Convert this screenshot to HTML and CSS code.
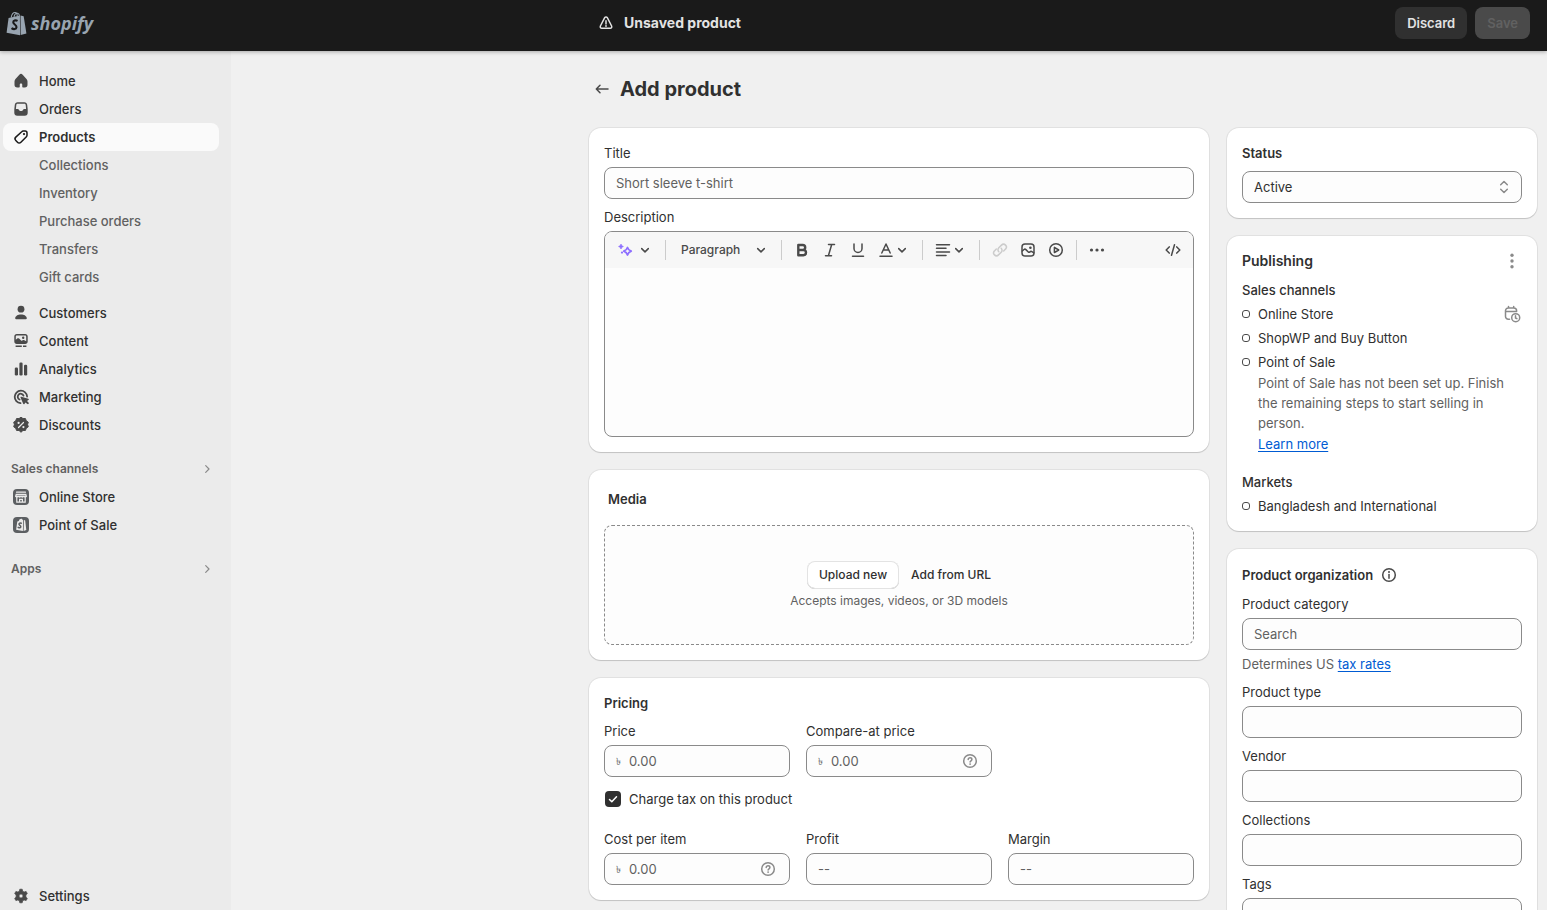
FILE: index.html
```html
<!DOCTYPE html>
<html lang="en">
<head>
<meta charset="utf-8">
<meta name="viewport" content="width=device-width, initial-scale=1">
<title>Add product</title>
<link rel="stylesheet" href="styles.css">
</head>
<body>
<svg class="sprite" aria-hidden="true">
  <symbol id="chevron-down" viewBox="0 0 20 20"><path class="line" d="m6.700 8.600 3.300 3.300 3.300-3.300"/></symbol>
  <symbol id="chevron-right" viewBox="0 0 20 20"><path class="line thin" d="m8.700 6.700 3.300 3.300-3.300 3.300"/></symbol>
  <symbol id="question" viewBox="0 0 20 20"><circle class="line" cx="10" cy="10" r="6.300"/><path class="line" d="M8.200 8.600c0-1.100.8-1.800 1.900-1.800s1.800.7 1.800 1.700c0 1.300-1.800 1.300-1.800 2.600"/><circle cx="10.100" cy="13.100" r=".9"/></symbol>
</svg>
<div class="app">
  <header class="topbar">
    <a class="brand" href="#" aria-label="shopify">
      <svg class="brand-bag" viewBox="0 0 22 26" aria-hidden="true">
        <path d="M2.700 7.200 14.600 4.500l.1 20.700L.6 22.600Z"/><path d="m15.200 4.500 3.300.9 2.900 18-6.100 1.700Z"/>
        <path class="handle" d="M5.400 6.800C6 3.700 7.700 1.400 9.600 1.500c1.600.1 2.200 1.700 2.200 4M8.400 6C8.900 3.500 10.600 2 12.200 2.200c1.300.2 1.800 1.300 1.900 2.800"/>
        <path class="cut" d="M12.100 10.300c-2.300-1.200-4.500-.4-4.500 1.500 0 2.300 3.600 2.300 3.400 5-.2 2.400-3 2.700-5.200 1"/>
      </svg>
      <span class="brand-name">shopify</span>
    </a>
    <div class="savebar">
      <svg class="icon" viewBox="0 0 20 20" aria-hidden="true"><path class="line" d="M8.700 4.700c.6-1 2-1 2.600 0l4.300 8.300c.5 1.100-.2 2.300-1.400 2.300H5.800c-1.200 0-1.900-1.200-1.400-2.300ZM10 7.700v3.300"/><circle cx="10" cy="13" r=".9"/></svg>
      <strong class="savebar-title">Unsaved product</strong>
      <button class="bar-button" type="button">Discard</button>
      <button class="bar-button is-disabled" type="button" disabled>Save</button>
    </div>
  </header>

  <nav class="sidebar" aria-label="Main">
    <ul class="nav">
      <li><a href="#"><svg class="icon" viewBox="0 0 20 20"><path d="M8.344 3.692a2.250 2.250 0 0 1 3.312 0l3.854 4.190a3.750 3.750 0 0 1 .99 2.538v3.330a2.750 2.750 0 0 1-2.750 2.750h-1.750a.75.75 0 0 1-.75-.75v-2c0-.69-.56-1.250-1.250-1.250s-1.250.56-1.250 1.250v2a.75.75 0 0 1-.75.75h-1.750a2.750 2.750 0 0 1-2.750-2.750v-3.330c0-.94.353-1.846.99-2.539l3.854-4.189Z"/></svg>Home</a></li>
      <li><a href="#"><svg class="icon" viewBox="0 0 20 20"><path fill-rule="evenodd" d="M6.600 3.300h6.800c1.500 0 2.600 1 2.800 2.400l.5 4.600v3.400a3 3 0 0 1-3 3H6.300a3 3 0 0 1-3-3v-3.400l.5-4.600c.2-1.400 1.300-2.400 2.800-2.400Zm.1 1.500c-.8 0-1.300.5-1.400 1.200L4.900 10h1.800c.7 0 1 .4 1.300 1 .4.700 1 1.100 2 1.100s1.600-.4 2-1.100c.3-.6.600-1 1.300-1h1.800l-.4-4c-.1-.7-.6-1.200-1.400-1.200Z"/></svg>Orders</a></li>
      <li><a class="is-active" href="#" aria-current="page"><svg class="icon" viewBox="0 0 20 20"><path class="line" d="M10.700 4.700c.4-.4.800-.6 1.400-.6h2c1.100 0 1.900.8 1.900 1.900v2.300c0 .5-.2 1-.6 1.400l-5.500 5.500c-1 1-2.500 1-3.400 0l-1.700-1.700c-1-1-1-2.400 0-3.400Z"/><circle cx="13" cy="7.100" r="1.100"/></svg>Products</a>
        <ul class="subnav">
          <li><a href="#">Collections</a></li>
          <li><a href="#">Inventory</a></li>
          <li><a href="#">Purchase orders</a></li>
          <li><a href="#">Transfers</a></li>
          <li><a href="#">Gift cards</a></li>
        </ul>
      </li>
      <li><a href="#"><svg class="icon" viewBox="0 0 20 20"><circle cx="10" cy="6.200" r="3.400"/><path d="M4.200 15.200c0-2.200 2.700-3.800 5.800-3.800s5.800 1.600 5.800 3.800c0 .7-.6 1.100-1.300 1.100h-9c-.7 0-1.300-.4-1.300-1.100Z"/></svg>Customers</a></li>
      <li><a href="#"><svg class="icon" viewBox="0 0 20 20"><path fill-rule="evenodd" d="M5.800 3h8.400c1.500 0 2.500 1 2.500 2.500v5c0 1.500-1 2.500-2.500 2.500H5.800c-1.500 0-2.500-1-2.500-2.500v-5C3.300 4 4.300 3 5.800 3Zm-1 5.700 1.400-1.200c.6-.5 1.300-.5 1.900.1l2 2c.3.300.7.200 1 0 .8-.7 1.500-.8 2.300-.3l1.800.9V5.700c0-.8-.4-1.200-1.200-1.200H6c-.8 0-1.200.4-1.200 1.200Zm7.400-3.100a1.200 1.200 0 1 1 0 2.400 1.200 1.200 0 0 1 0-2.400Z"/><path d="M4.600 14.400h6.200v1.500H4.600ZM12 14.400h3.400v1.500H12Z"/></svg>Content</a></li>
      <li><a href="#"><svg class="icon" viewBox="0 0 20 20"><rect x="3.800" y="8.500" width="3.200" height="8" rx="1.200"/><rect x="8.400" y="3.500" width="3.200" height="13" rx="1.200"/><rect x="13" y="5.800" width="3.200" height="10.700" rx="1.200"/></svg>Analytics</a></li>
      <li><a href="#"><svg class="icon" viewBox="0 0 20 20"><path class="line bold" d="M9.500 16.100A6.200 6.200 0 1 1 16.100 9.500"/><path class="line bold" d="M8.600 12.500a3 3 0 1 1 3.900-3.900"/><path d="M10.300 9.700 17.300 11.800c.7.200.7 1 .1 1.300l-1.400.8 1.700 1.900c.5.600-.6 1.800-1.300 1.300l-2-1.700-.9 1.500c-.4.600-1.100.5-1.300-.1L9.500 10.500c-.2-.5.300-1 .8-.8Z"/></svg>Marketing</a></li>
      <li><a href="#"><svg class="icon" viewBox="0 0 20 20"><path d="m10 2.200 2 1.400 2.400-.1.900 2.300 2 1.400-.7 2.300.7 2.300-2 1.400-.9 2.300-2.400-.1-2 1.900-2-1.900-2.400.1-.9-2.300-2-1.400.7-2.300-.7-2.300 2-1.400.9-2.300 2.400.1Z" stroke="currentColor" stroke-linejoin="round"/><path class="knock" d="m7.500 12.500 5-5"/><circle class="knock-fill" cx="7.600" cy="7.900" r="1.100"/><circle class="knock-fill" cx="12.400" cy="12.100" r="1.100"/></svg>Discounts</a></li>
    </ul>
    <a class="nav-heading" href="#">Sales channels<svg class="icon muted" viewBox="0 0 20 20"><use href="#chevron-right"/></svg></a>
    <ul class="nav">
      <li><a href="#"><svg class="icon channel" viewBox="0 0 20 20"><rect x="2" y="2" width="16" height="16" rx="4"/><path class="knock" d="M5.500 5.200h9M5.200 7.300 4.700 9.200h10.600l-.5-1.900Z"/><path class="knock-fill" d="M4.300 9h11.400c0 1-.6 1.700-1.400 1.700s-1.200-.3-1.500-.8c-.6 1-2.200 1-2.800 0-.6 1-2.200 1-2.800 0-.3.500-.8.800-1.500.8S4.300 10 4.300 9Z"/><path class="knock" d="M5.800 10.500v4.700h8.400v-4.700M8.600 15v-2.600h2.800V15"/></svg>Online Store</a></li>
      <li><a href="#"><svg class="icon channel" viewBox="0 0 20 20"><rect x="2" y="2" width="16" height="16" rx="4"/><path class="knock-fill" d="m6.300 6.500 1.500-.5c.4-1.500 1.300-2.300 2.300-2.300.8 0 1.300.5 1.600 1.300l.5-.1-.3 11-6.800-1.200ZM13 5l1.200.5 1.100 9.500-2.700.9Z"/><path class="line" d="M10.300 8.300c-1.300-.6-2.300-.2-2.300.8 0 1.200 1.900 1.200 1.800 2.600-.1 1.200-1.400 1.400-2.600.6"/></svg>Point of Sale</a></li>
    </ul>
    <a class="nav-heading" href="#">Apps<svg class="icon muted" viewBox="0 0 20 20"><use href="#chevron-right"/></svg></a>
    <ul class="nav nav-bottom">
      <li><a href="#"><svg class="icon" viewBox="0 0 20 20"><path fill-rule="evenodd" d="M8.800 3.200h2.400l.5 2 1.400.8 2-.6 1.200 2.100L14.900 9v2l1.400 1.500-1.200 2.100-2-.6-1.400.8-.5 2H8.800l-.5-2-1.400-.8-2 .6-1.200-2.100L5.100 11V9L3.700 7.500l1.200-2.100 2 .6 1.400-.8ZM10 8a2 2 0 1 0 0 4 2 2 0 0 0 0-4Z" stroke="currentColor" stroke-width=".7" stroke-linejoin="round"/></svg>Settings</a></li>
    </ul>
  </nav>

  <main class="main">
    <div class="page">
      <div class="page-title">
        <a href="#" aria-label="Back"><svg class="icon" viewBox="0 0 20 20"><path class="line" d="M16 10H4.500M8 6.300 4.300 10 8 13.700"/></svg></a>
        <h1>Add product</h1>
      </div>
      <form class="columns">
        <div class="column">
          <section class="card">
            <div class="field">
              <label for="title">Title</label>
              <input class="control" id="title" type="text" placeholder="Short sleeve t-shirt">
            </div>
            <div class="field">
              <label for="description">Description</label>
              <div class="editor">
                <div class="toolbar">
                  <button class="tool pair magic" type="button" aria-label="Generate text"><svg class="icon" viewBox="0 0 20 20"><path class="line bold" d="M12.500 7.500c.6 1.900 1.600 2.900 3.700 3.700-2.100.8-3.100 1.800-3.700 3.800-.6-2-1.600-3-3.700-3.800 2.100-.8 3.100-1.800 3.700-3.700Z"/><path d="M6 4.300c.4 1.200 1 1.800 2.300 2.200C7 6.900 6.400 7.500 6 8.800 5.600 7.500 5 6.900 3.700 6.500 5 6.100 5.600 5.500 6 4.300Z" stroke="currentColor"/><circle cx="7" cy="12.600" r="1.100"/></svg><svg class="icon dark" viewBox="0 0 20 20"><use href="#chevron-down"/></svg></button>
                  <span class="divider"></span>
                  <button class="tool paragraph" type="button">Paragraph<svg class="icon" viewBox="0 0 20 20"><use href="#chevron-down"/></svg></button>
                  <span class="divider"></span>
                  <div class="tool-group">
                    <button class="tool" type="button" aria-label="Bold"><svg class="icon" viewBox="0 0 20 20"><path class="line heavy" d="M6.300 5h4.400a2.500 2.500 0 0 1 0 5H6.300Zm0 5h5.100a2.600 2.600 0 0 1 0 5.200H6.300Z"/></svg></button>
                    <button class="tool" type="button" aria-label="Italic"><svg class="icon" viewBox="0 0 20 20"><path class="line" d="M8.500 4.500h6M5.500 15.700h6M11.700 4.500 8.400 15.700"/></svg></button>
                    <button class="tool" type="button" aria-label="Underline"><svg class="icon" viewBox="0 0 20 20"><path class="line" d="M6 4v4.500a4 4 0 0 0 8 0V4M4.500 16.200h11"/></svg></button>
                    <button class="tool pair" type="button" aria-label="Text color"><svg class="icon" viewBox="0 0 20 20"><path class="line" d="m5.800 13 4.200-9 4.200 9M7.200 10h5.600M4 16.200h12"/></svg><svg class="icon" viewBox="0 0 20 20"><use href="#chevron-down"/></svg></button>
                  </div>
                  <span class="divider"></span>
                  <button class="tool pair align" type="button" aria-label="Alignment"><svg class="icon" viewBox="0 0 20 20"><path class="line" d="M3.500 4.700h13M3.500 8.300h9.500M3.500 11.900h13M3.500 15.500h9.500"/></svg><svg class="icon" viewBox="0 0 20 20"><use href="#chevron-down"/></svg></button>
                  <span class="divider"></span>
                  <div class="tool-group">
                    <button class="tool is-faded" type="button" aria-label="Link" disabled><svg class="icon" viewBox="0 0 20 20"><path class="line" d="M8.800 11.800a2.800 2.800 0 0 1 0-4l2.700-2.700a2.800 2.800 0 0 1 4 4L13.700 11M11.200 8.200a2.800 2.800 0 0 1 0 4l-2.700 2.700a2.800 2.800 0 0 1-4-4L6.300 9"/></svg></button>
                    <button class="tool" type="button" aria-label="Image"><svg class="icon" viewBox="0 0 20 20"><rect class="line" x="4" y="4" width="12" height="12" rx="3"/><path class="line" d="m4.300 11 1.700-1.500c.6-.5 1.300-.5 1.900.1l2.400 2.400c.5.500 1 .4 1.600-.1.700-.6 1.400-.7 2.100-.2l1.800 1.200"/><circle cx="12.400" cy="7.700" r="1.300"/></svg></button>
                    <button class="tool" type="button" aria-label="Video"><svg class="icon" viewBox="0 0 20 20"><circle class="line" cx="10" cy="10" r="6.300"/><path class="line" d="M8.400 7.400v5.200l4.300-2.600Z"/></svg></button>
                  </div>
                  <span class="divider"></span>
                  <button class="tool more" type="button" aria-label="More"><svg class="icon" viewBox="0 0 20 20"><circle cx="4.500" cy="10" r="1.600"/><circle cx="10" cy="10" r="1.600"/><circle cx="15.500" cy="10" r="1.600"/></svg></button>
                  <button class="tool source" type="button" aria-label="Show HTML"><svg class="icon" viewBox="0 0 20 20"><path class="line" d="M6.200 6.900 3.200 10l3 3.100M13.800 6.900l3 3.100-3 3.100M11.500 4.800l-3 10.400"/></svg></button>
                </div>
                <textarea id="description"></textarea>
              </div>
            </div>
          </section>

          <section class="card media">
            <h2>Media</h2>
            <div class="dropzone">
              <div class="upload-row">
                <button class="upload" type="button">Upload new</button>
                <button class="plain" type="button">Add from URL</button>
              </div>
              <p>Accepts images, videos, or 3D models</p>
            </div>
          </section>

          <section class="card">
            <h2>Pricing</h2>
            <div class="price-grid">
              <div class="field">
                <label for="price">Price</label>
                <div class="control"><span class="currency">৳</span><input id="price" type="text" placeholder="0.00"></div>
              </div>
              <div class="field">
                <label for="compare">Compare-at price</label>
                <div class="control"><span class="currency">৳</span><input id="compare" type="text" placeholder="0.00"><svg class="icon muted" viewBox="0 0 20 20"><use href="#question"/></svg></div>
              </div>
            </div>
            <label class="check"><span class="check-box"><input type="checkbox" checked><svg viewBox="0 0 16 16"><path class="line" d="m4.500 8.500 2.300 2.300 4.700-5.100"/></svg></span>Charge tax on this product</label>
            <div class="price-grid">
              <div class="field">
                <label for="cost">Cost per item</label>
                <div class="control"><span class="currency">৳</span><input id="cost" type="text" placeholder="0.00"><svg class="icon muted" viewBox="0 0 20 20"><use href="#question"/></svg></div>
              </div>
              <div class="field">
                <label for="profit">Profit</label>
                <input class="control" id="profit" type="text" placeholder="--">
              </div>
              <div class="field">
                <label for="margin">Margin</label>
                <input class="control" id="margin" type="text" placeholder="--">
              </div>
            </div>
          </section>
        </div>

        <div class="column">
          <section class="card">
            <h2><label for="status">Status</label></h2>
            <div class="select">
              <select class="control" id="status"><option>Active</option><option>Draft</option></select>
              <svg class="icon muted" viewBox="0 0 20 20"><path class="line" d="M6.700 7.700 10 4.500l3.300 3.200M6.700 12.300l3.300 3.200 3.300-3.200"/></svg>
            </div>
          </section>

          <section class="card publishing">
            <div class="card-head">
              <h2>Publishing</h2>
              <button class="tool" type="button" aria-label="Publishing options"><svg class="icon muted" viewBox="0 0 20 20"><circle cx="10" cy="4.300" r="1.700"/><circle cx="10" cy="10" r="1.700"/><circle cx="10" cy="15.700" r="1.700"/></svg></button>
            </div>
            <h3>Sales channels</h3>
            <ul class="channels">
              <li>Online Store<button class="tool schedule" type="button" aria-label="Schedule"><svg class="icon muted" viewBox="0 0 20 20"><path class="line" d="M7.500 15.200H6.300A2.800 2.800 0 0 1 3.500 12.400V6.800A2.800 2.800 0 0 1 6.300 4h5.500a2.800 2.800 0 0 1 2.800 2.800v.7M3.500 7.500h11M6.500 2.500V4M11.700 2.500V4"/><circle class="line" cx="13.700" cy="13.700" r="4"/><path class="line" d="M13.500 11.700V14l1.400.7"/></svg></button></li>
              <li>ShopWP and Buy Button</li>
              <li>Point of Sale</li>
            </ul>
            <div class="channel-note">
              <p>Point of Sale has not been set up. Finish the remaining steps to start selling in person.</p>
              <a href="#">Learn more</a>
            </div>
            <h3>Markets</h3>
            <ul class="channels">
              <li>Bangladesh and International</li>
            </ul>
          </section>

          <section class="card organization">
            <h2>Product organization<svg class="icon" viewBox="0 0 20 20"><circle class="line" cx="10" cy="10" r="6.300"/><path class="line" d="M10 9.500v3.700"/><circle cx="10" cy="7" r="1"/></svg></h2>
            <div class="field">
              <label for="category">Product category</label>
              <input class="control" id="category" type="text" placeholder="Search">
              <p class="hint">Determines US <a href="#">tax rates</a></p>
            </div>
            <div class="field"><label for="type">Product type</label><input class="control" id="type" type="text"></div>
            <div class="field"><label for="vendor">Vendor</label><input class="control" id="vendor" type="text"></div>
            <div class="field"><label for="collections">Collections</label><input class="control" id="collections" type="text"></div>
            <div class="field"><label for="tags">Tags</label><input class="control" id="tags" type="text"></div>
          </section>
        </div>
      </form>
    </div>
  </main>
</div>
</body>
</html>
```

FILE: styles.css
```css
*, *::before { box-sizing: border-box; }

body {
  margin: 0;
  color: #303030;
  background: #f0f0f0;
  font: 400 13px/20px Inter, "Noto Sans", sans-serif;
}

h1, h2, h3, p, ul { margin: 0; padding: 0; }
ul { list-style: none; }
button, input, select, textarea { font: inherit; color: inherit; }
button { border: 0; padding: 0; background: none; cursor: pointer; }
a { color: #005bd3; text-underline-offset: 2px; }

.sprite { position: absolute; width: 0; height: 0; }
.icon { display: block; flex: none; width: 20px; height: 20px; fill: currentColor; }
.line { fill: none; stroke: currentColor; stroke-width: 1.5; stroke-linecap: round; stroke-linejoin: round; }
.thin { stroke-width: 1.2; }
.bold { stroke-width: 1.8; }
.heavy { stroke-width: 2.4; }
.knock { fill: none; stroke: #ebebeb; stroke-width: 1.2; stroke-linecap: round; }
.knock-fill { fill: #ebebeb; }
.muted { color: #8a8a8a; }

.app {
  display: grid;
  grid-template: auto minmax(0, 1fr) / 231px minmax(0, 1fr);
  height: 100vh;
}

/* Top bar */
.topbar {
  grid-column: 1 / -1;
  z-index: 1;
  display: flex;
  padding: 7px 0 12px;
  background: #1a1a1a;
  box-shadow: 0 1px 4px rgba(0, 0, 0, .3);
}
.brand {
  display: flex;
  align-items: center;
  gap: 4px;
  padding-left: 6px;
  color: #98a4b0;
  text-decoration: none;
}
.brand-bag { width: 21px; height: 25px; fill: currentColor; }
.brand-bag .handle { fill: none; stroke: currentColor; stroke-width: 1.1; }
.brand-bag .cut { fill: none; stroke: #1a1a1a; stroke-width: 2.2; }
.brand-name { font: italic 700 18px/24px "Open Sans", "Noto Sans", sans-serif; }
.savebar {
  display: flex;
  align-items: center;
  gap: 8px;
  flex: 1;
  max-width: 951px;
  margin-left: auto;
  padding-right: 17px;
  color: #e3e3e3;
}
.savebar-title { flex: 1; font-size: 14px; font-weight: 650; }
.bar-button {
  height: 32px;
  padding: 0 12px;
  border-radius: 8px;
  background: #303030;
  font-weight: 600;
}
.bar-button.is-disabled { background: #4a4a4a; color: #616161; }

/* Sidebar */
.sidebar {
  display: flex;
  flex-direction: column;
  padding: 16px 12px 0 3px;
  background: #ebebeb;
}
.nav a {
  display: flex;
  align-items: center;
  gap: 8px;
  height: 28px;
  padding: 0 8px;
  border-radius: 8px;
  color: #303030;
  font-weight: 500;
  text-decoration: none;
}
.nav .icon { color: #4a4a4a; }
.nav a.is-active { background: #fafafa; font-weight: 600; }
.nav a.is-active .icon { color: #1a1a1a; }
.nav .channel { color: #5c5f62; }
.subnav { margin-bottom: 8px; }
.nav .subnav a { padding-left: 36px; color: #616161; font-weight: 450; }
.nav-heading {
  display: flex;
  align-items: center;
  justify-content: space-between;
  height: 28px;
  margin-top: 16px;
  padding: 0 2px 0 8px;
  color: #616161;
  font-size: 12px;
  font-weight: 600;
  text-decoration: none;
}
.nav-bottom { margin-top: auto; }

/* Page */
.main { overflow-y: auto; scrollbar-width: none; }
.page { max-width: 958px; margin-left: auto; padding: 26px 10px 16px 0; }
.page-title { display: flex; align-items: center; gap: 8px; padding-left: 3px; }
.page-title a { color: #4a4a4a; }
.page-title h1 { font-size: 20px; line-height: 24px; font-weight: 650; }
.columns {
  display: grid;
  grid-template-columns: minmax(0, 2fr) minmax(0, 1fr);
  align-items: start;
  gap: 18px;
  margin-top: 27px;
}
.column { display: grid; gap: 18px; }
.card {
  display: flex;
  flex-direction: column;
  gap: 8px;
  padding: 15px;
  border-radius: 12px;
  background: #fff;
  box-shadow: 0 0 0 1px rgba(0, 0, 0, .06), 0 1px 1px rgba(0, 0, 0, .14);
}
h2 { font-size: 13px; line-height: 20px; font-weight: 600; }
h3 { font-size: 13px; line-height: 20px; font-weight: 500; }

/* Form controls */
.field { display: grid; grid-template-columns: minmax(0, 1fr); gap: 4px; }
.control {
  display: flex;
  align-items: center;
  width: 100%;
  height: 32px;
  padding: 0 11px;
  border: 1px solid #8a8a8a;
  border-radius: 8px;
  background: #fdfdfd;
}
.control input {
  flex: 1;
  min-width: 0;
  padding: 0;
  border: 0;
  outline: 0;
  background: none;
}
::placeholder { color: #616161; opacity: 1; }
.currency { width: 13px; color: #616161; font-size: 10px; }
.select { display: grid; align-items: center; }
.select > * { grid-area: 1 / 1; }
.select select { appearance: none; }
.select .icon { justify-self: end; margin-right: 8px; pointer-events: none; }
.hint { color: #616161; }

/* Editor */
.editor {
  overflow: hidden;
  border: 1px solid #8a8a8a;
  border-radius: 8px;
  background: #fdfdfd;
}
.toolbar {
  display: flex;
  align-items: center;
  height: 36px;
  padding: 0 10px;
  background: #f7f7f7;
}
.editor textarea {
  display: block;
  width: 100%;
  height: 168px;
  padding: 8px 12px;
  border: 0;
  outline: 0;
  resize: none;
  background: none;
}
.tool { display: flex; align-items: center; color: #4a4a4a; }
.pair .icon + .icon { margin-left: -4px; }
.pair.magic .icon + .icon { margin-left: 0; }
.magic { color: #8e6fff; }
.dark { color: #4a4a4a; }
.divider { width: 1px; height: 20px; background: #ccc; }
.magic + .divider { margin-left: 10px; }
.paragraph { gap: 11px; margin: 0 10px 0 15px; font-size: 12px; font-weight: 500; }
.tool-group { display: flex; gap: 8px; margin: 0 10px; }
.align { margin: 0 10px; }
.more { margin-left: 10px; }
.source { margin-left: auto; }
.is-faded { color: #ccc; }

/* Media */
.media { gap: 16px; padding-top: 19px; }
.media h2 { padding-left: 4px; }
.dropzone {
  display: flex;
  flex-direction: column;
  align-items: center;
  justify-content: center;
  gap: 4px;
  height: 120px;
  padding-bottom: 1px;
  border: 1px dashed #8a8a8a;
  border-radius: 8px;
  background: #fdfdfd;
  color: #616161;
  font-size: 12px;
  line-height: 16px;
}
.upload-row { display: flex; align-items: center; gap: 12px; color: #303030; font-weight: 500; }
.upload {
  height: 28px;
  padding: 0 12px;
  border-radius: 8px;
  background: #fff;
  box-shadow: inset 0 0 0 1px #e3e3e3, inset 0 -1px 0 #b5b5b5;
}

/* Pricing */
.price-grid { display: grid; grid-template-columns: repeat(3, minmax(0, 1fr)); gap: 16px; }
.check { display: flex; align-items: center; gap: 8px; margin: 4px 0 12px 1px; }
.check-box { display: grid; }
.check-box > * { grid-area: 1 / 1; width: 16px; height: 16px; margin: 0; }
.check-box input { appearance: none; border-radius: 4px; background: #303030; }
.check-box svg { color: #fff; pointer-events: none; }

/* Publishing */
.publishing { gap: 4px; }
.card-head { display: flex; justify-content: space-between; margin-bottom: 5px; }
.card-head h2 { font-size: 14px; }
.channels { display: grid; gap: 4px; }
.channels li { display: flex; align-items: center; gap: 8px; }
.channels li::before {
  content: "";
  width: 8px;
  height: 8px;
  border: 1px solid #4a4a4a;
  border-radius: 3px;
}
.schedule { margin-left: auto; }
.channel-note { margin: -3px 0 14px 16px; color: #616161; }
.channel-note a { display: inline-block; margin-top: 1px; }

/* Organization */
.organization { padding-top: 16px; }
.organization h2 { display: flex; gap: 6px; margin-bottom: 1px; }
.organization .icon { color: #4a4a4a; }
```
